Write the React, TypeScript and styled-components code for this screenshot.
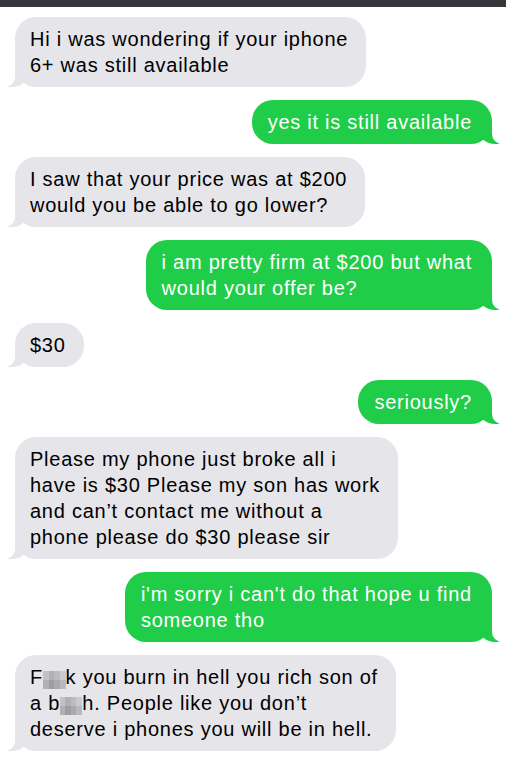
import React from "react";
import styled, { createGlobalStyle } from "styled-components";

const Global = createGlobalStyle`
  html, body { margin: 0; padding: 0; background: #ffffff; }
  body { font-family: "Liberation Sans", Arial, sans-serif; -webkit-font-smoothing: antialiased; }
`;

const TopBar = styled.div`
  height: 7px;
  background: #37373b;
`;

const Thread = styled.div`
  display: flex;
  flex-direction: column;
  gap: 13px;
  padding: 10px 14px 20px 15px;
`;

const Bubble = styled.div<{ $me?: boolean }>`
  position: relative;
  align-self: ${(p) => (p.$me ? "flex-end" : "flex-start")};
  background: ${(p) => (p.$me ? "#1fcd48" : "#e5e5ea")};
  color: ${(p) => (p.$me ? "#ffffff" : "#000000")};
  font-size: 20px;
  letter-spacing: 0.75px;
  line-height: 26px;
  padding: 9px ${(p) => (p.$me ? "20px" : "18px")} 9px ${(p) => (p.$me ? "16px" : "15px")};
  border-radius: 21px;
  white-space: nowrap;

  &::before {
    content: "";
    position: absolute;
    bottom: 0;
    height: 22px;
    width: 20px;
    background: ${(p) => (p.$me ? "#1fcd48" : "#e5e5ea")};
    ${(p) =>
      p.$me
        ? "right: -7px; border-bottom-left-radius: 16px 14px;"
        : "left: -7px; border-bottom-right-radius: 16px 14px;"}
  }
  &::after {
    content: "";
    position: absolute;
    bottom: 0;
    height: 22px;
    width: 26px;
    background: #ffffff;
    ${(p) =>
      p.$me
        ? "right: -26px; border-bottom-left-radius: 10px;"
        : "left: -26px; border-bottom-right-radius: 10px;"}
  }
`;

const Line = styled.span`
  display: block;
  position: relative;
  z-index: 1;
`;

const Censor = styled.span`
  display: inline-block;
  color: transparent;
  vertical-align: -3px;
  height: 18px;
  line-height: 18px;
  background:
    linear-gradient(180deg, rgba(255,255,255,0.12) 0 50%, rgba(0,0,0,0.05) 50% 100%),
    linear-gradient(90deg, #b9b9be 0 25%, #a6a6ab 25% 50%, #b2b2b7 50% 75%, #c4c4c8 75% 100%);
`;

type Msg = { me?: boolean; lines: React.ReactNode[] };

const RSQ = "\u2019";

const messages: Msg[] = [
  { lines: ["Hi i was wondering if your iphone", "6+ was still available"] },
  { me: true, lines: ["yes it is still available"] },
  { lines: ["I saw that your price was at $200", "would you be able to go lower?"] },
  { me: true, lines: ["i am pretty firm at $200 but what", "would your offer be?"] },
  { lines: ["$30"] },
  { me: true, lines: ["seriously?"] },
  {
    lines: [
      "Please my phone just broke all i",
      "have is $30 Please my son has work",
      `and can${RSQ}t contact me without a`,
      "phone please do $30 please sir",
    ],
  },
  { me: true, lines: ["i'm sorry i can't do that hope u find", "someone tho"] },
  {
    lines: [
      <>
        F<Censor>uc</Censor>k you burn in hell you rich son of
      </>,
      <>
        a b<Censor>itc</Censor>h. People like you don{RSQ}t
      </>,
      "deserve i phones you will be in hell.",
    ],
  },
];

export default function App() {
  return (
    <>
      <Global />
      <TopBar />
      <Thread>
        {messages.map((m, i) => (
          <Bubble key={i} $me={m.me}>
            {m.lines.map((l, j) => (
              <Line key={j}>{l}</Line>
            ))}
          </Bubble>
        ))}
      </Thread>
    </>
  );
}
